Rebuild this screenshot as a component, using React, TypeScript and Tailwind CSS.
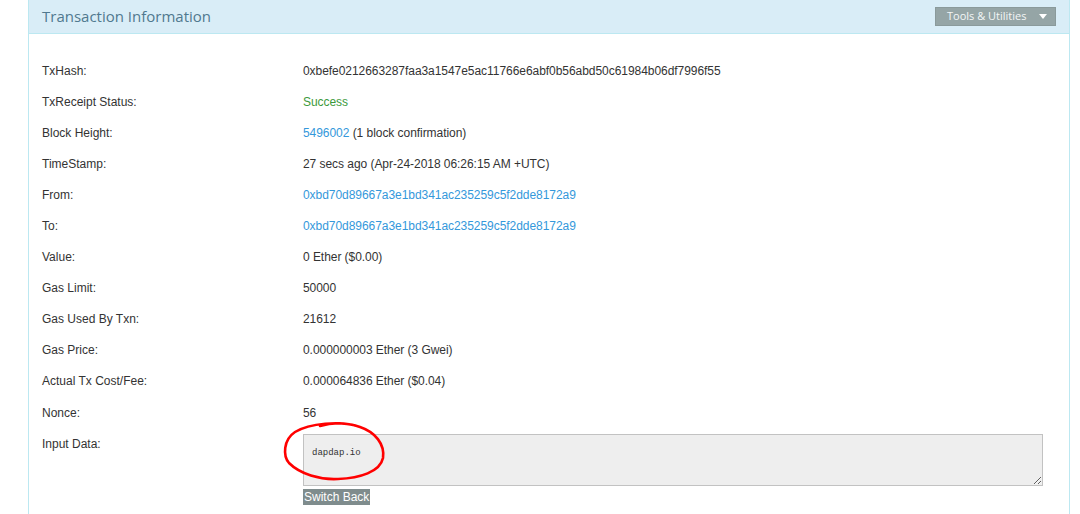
import React from 'react';

type Row = { label: string; value: React.ReactNode };

const link = 'text-[#3498db]';

const rows: Row[] = [
  { label: 'TxHash:', value: '0xbefe0212663287faa3a1547e5ac11766e6abf0b56abd50c61984b06df7996f55' },
  { label: 'TxReceipt Status:', value: <span className="text-[#3c9a3c]">Success</span> },
  {
    label: 'Block Height:',
    value: (
      <>
        <span className={link}>5496002</span> (1 block confirmation)
      </>
    ),
  },
  { label: 'TimeStamp:', value: '27 secs ago (Apr-24-2018 06:26:15 AM +UTC)' },
  { label: 'From:', value: <span className={link}>0xbd70d89667a3e1bd341ac235259c5f2dde8172a9</span> },
  { label: 'To:', value: <span className={link}>0xbd70d89667a3e1bd341ac235259c5f2dde8172a9</span> },
  { label: 'Value:', value: '0 Ether ($0.00)' },
  { label: 'Gas Limit:', value: '50000' },
  { label: 'Gas Used By Txn:', value: '21612' },
  { label: 'Gas Price:', value: '0.000000003 Ether (3 Gwei)' },
  { label: 'Actual Tx Cost/Fee:', value: '0.000064836 Ether ($0.04)' },
  { label: 'Nonce:', value: '56' },
];

const App: React.FC = () => {
  return (
    <div className="w-[1080px] h-[514px] overflow-hidden bg-white font-['Liberation_Sans',Arial,sans-serif] text-[12px] text-[#333]">
      <div className="ml-[28px] w-[1042px] border border-t-0 border-[#bce8f1] h-[540px]">
        {/* panel heading */}
        <div className="h-[34px] bg-[#d9edf7] border-b border-[#bce8f1] flex items-center justify-between pl-[13px] pr-[13px]">
          <h3 className="font-['Open_Sans',sans-serif] text-[15px] text-[#50798f] leading-none -mt-[1px]">
            Transaction Information
          </h3>
          <button className="h-[19px] w-[121px] -mt-[1px] bg-[#95a5a6] border border-[#8a9a9b] flex items-center justify-between pl-[11px] pr-[8px] font-['Open_Sans',sans-serif] text-[11px] text-[#f3f6f6]">
            <span>Tools &amp; Utilities</span>
            <svg width="8" height="5" viewBox="0 0 8 5">
              <path d="M0 0h8L4 5z" fill="#ffffff" />
            </svg>
          </button>
        </div>

        <div className="pt-[21px] px-[13px]">
          {rows.map((r) => (
            <div key={r.label} className="flex h-[31.1px] items-center">
              <div className="w-[261px] shrink-0">{r.label}</div>
              <div className="tracking-[-0.05px]">{r.value}</div>
            </div>
          ))}

          <div className="flex">
            <div className="w-[261px] shrink-0 leading-[32px]">Input Data:</div>
            <div className="pt-[6px]">
              <div className="relative">
                <textarea
                  readOnly
                  defaultValue="dapdap.io"
                  className="block w-[740px] h-[52px] bg-[#eeeeee] border border-[#c2c2c2] pl-[8px] pt-[12px] font-['Liberation_Mono',monospace] text-[9px] text-[#333] outline-none resize"
                />
                {/* hand-drawn red ring */}
                <svg
                  className="absolute left-[-23px] top-[-16px] pointer-events-none"
                  width="110"
                  height="70"
                  viewBox="0 0 110 70"
                >
                  <path
                    d="M77 8 C60 3 30 5 15 14 C3 22 3 38 9 45 C20 56 40 62 58 61 C80 60 100 54 103 40 C105 26 95 14 80 9 C65 4 50 5 40 8"
                    fill="none"
                    stroke="#ff0000"
                    strokeWidth="2.6"
                    strokeLinecap="round"
                  />
                </svg>
              </div>
              <button className="mt-[3px] h-[16px] px-[1px] bg-[#7f8c8d] text-white text-[12px] leading-[16px]">
                Switch Back
              </button>
            </div>
          </div>
        </div>
      </div>
    </div>
  );
};

export default App;
